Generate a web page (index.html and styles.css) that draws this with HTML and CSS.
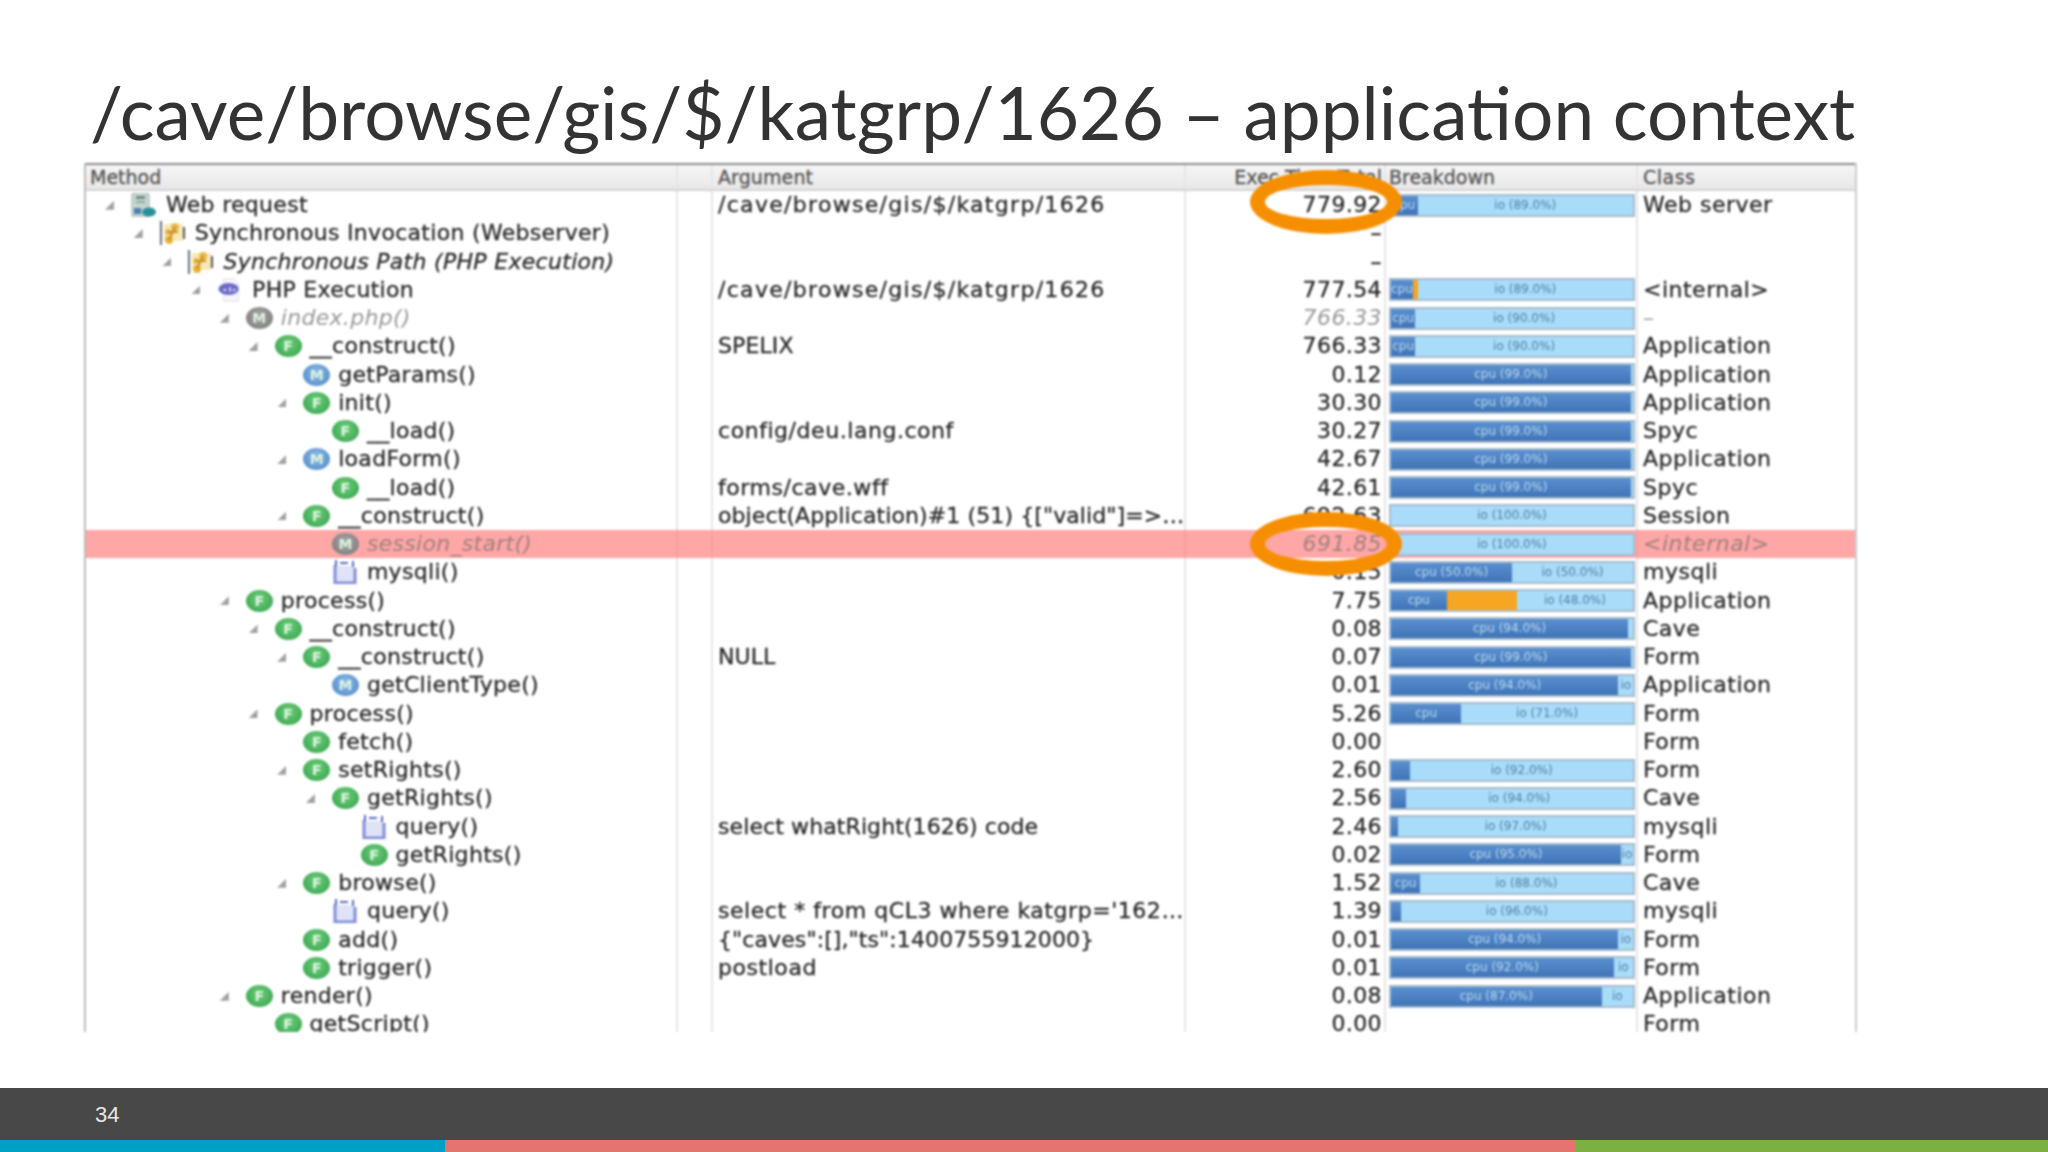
FILE: index.html
```html
<!DOCTYPE html>
<html lang="en">
<head>
  <meta charset="UTF-8">
  <title>/cave/browse/gis/$/katgrp/1626 – application context</title>
  <link rel="stylesheet" href="styles.css">
</head>
<body>

<svg class="sprite" aria-hidden="true">
  <symbol id="i-web" viewBox="0 0 26 24">
    <rect x="1" y="0" width="17" height="24" rx="2" fill="#c6d5cf" stroke="#9db0ab"/>
    <rect x="5" y="3" width="9" height="3" fill="#6f8f86"/>
    <rect x="5" y="8" width="9" height="2" fill="#8fa8a0"/>
    <rect x="3" y="15" width="7" height="6" fill="#4d7fb0"/>
    <ellipse cx="18" cy="19" rx="7" ry="4.500" fill="#2a8f9c"/>
  </symbol>
  <symbol id="i-sync" viewBox="0 0 26 24">
    <rect x="0" y="0" width="2" height="24" fill="#66707a"/>
    <rect x="4" y="3" width="19" height="17" fill="#f8e8b8"/>
    <rect x="23" y="6" width="2" height="12" fill="#555"/>
    <circle cx="15" cy="6" r="4" fill="#e8b84c"/>
    <circle cx="8" cy="11" r="3" fill="#e8b84c"/>
    <circle cx="9" cy="19" r="4" fill="#e8b23c"/>
    <path d="M9 19L15 6M8 11h10" stroke="#c98f1f" stroke-width="2"/>
  </symbol>
  <symbol id="i-php" viewBox="0 0 26 26">
    <path d="M6 1h11l5 5v19H6z" fill="#f7f7fb" stroke="#dcdce8"/>
    <ellipse cx="11.500" cy="12" rx="11" ry="6.500" fill="#6c68c6"/>
    <path d="M6 13h3M13 10v5M16 13h3" stroke="#dcdcf5" stroke-width="2"/>
  </symbol>
  <symbol id="i-db" viewBox="0 0 26 24">
    <rect x="3" y="6" width="20" height="17" rx="1" fill="#e0e3f6"/>
    <path d="M3 5v18h20V8" fill="none" stroke="#7f8dd8" stroke-width="3"/>
    <path d="M4 0v6M21 1v6M8 3h8" stroke="#5a6abc" stroke-width="2"/>
  </symbol>
</svg>

<div class="slide">
  <h1 class="title">/cave/browse/gis/$/katgrp/1626 – application context</h1>

  <div class="tree-table">
    <div class="row head">
      <div class="cell method">Method</div>
      <div class="cell gap"></div>
      <div class="cell arg">Argument</div>
      <div class="cell exec">Exec Time Total</div>
      <div class="cell breakdown">Breakdown</div>
      <div class="cell cls">Class</div>
    </div>

    <div class="row">
      <div class="cell method d0"><span class="tog"></span><svg class="ico"><use href="#i-web"/></svg>Web request</div>
      <div class="cell gap"></div>
      <div class="cell arg path">/cave/browse/gis/$/katgrp/1626</div>
      <div class="cell exec">779.92<span class="ring"></span></div>
      <div class="cell breakdown"><div class="bar"><span class="cpu" style="width:11%">cpu</span><span class="io">io (89.0%)</span></div></div>
      <div class="cell cls">Web server</div>
    </div>
    <div class="row">
      <div class="cell method d1"><span class="tog"></span><svg class="ico"><use href="#i-sync"/></svg>Synchronous Invocation (Webserver)</div>
      <div class="cell gap"></div>
      <div class="cell arg"></div>
      <div class="cell exec">–</div>
      <div class="cell breakdown"></div>
      <div class="cell cls"></div>
    </div>
    <div class="row">
      <div class="cell method d2 em"><span class="tog"></span><svg class="ico"><use href="#i-sync"/></svg>Synchronous Path (PHP Execution)</div>
      <div class="cell gap"></div>
      <div class="cell arg"></div>
      <div class="cell exec">–</div>
      <div class="cell breakdown"></div>
      <div class="cell cls"></div>
    </div>
    <div class="row">
      <div class="cell method d3"><span class="tog"></span><svg class="ico"><use href="#i-php"/></svg>PHP Execution</div>
      <div class="cell gap"></div>
      <div class="cell arg path">/cave/browse/gis/$/katgrp/1626</div>
      <div class="cell exec">777.54</div>
      <div class="cell breakdown"><div class="bar"><span class="cpu" style="width:9%">cpu</span><span class="hot" style="width:2%"></span><span class="io">io (89.0%)</span></div></div>
      <div class="cell cls">&lt;internal&gt;</div>
    </div>
    <div class="row muted">
      <div class="cell method d4"><span class="tog"></span><i class="fn gr">M</i>index.php()</div>
      <div class="cell gap"></div>
      <div class="cell arg"></div>
      <div class="cell exec">766.33</div>
      <div class="cell breakdown"><div class="bar"><span class="cpu" style="width:10%">cpu</span><span class="io">io (90.0%)</span></div></div>
      <div class="cell cls">–</div>
    </div>
    <div class="row">
      <div class="cell method d5"><span class="tog"></span><i class="fn">F</i>__construct()</div>
      <div class="cell gap"></div>
      <div class="cell arg">SPELIX</div>
      <div class="cell exec">766.33</div>
      <div class="cell breakdown"><div class="bar"><span class="cpu" style="width:10%">cpu</span><span class="io">io (90.0%)</span></div></div>
      <div class="cell cls">Application</div>
    </div>
    <div class="row">
      <div class="cell method d6"><span class="tog no"></span><i class="fn bl">M</i>getParams()</div>
      <div class="cell gap"></div>
      <div class="cell arg"></div>
      <div class="cell exec">0.12</div>
      <div class="cell breakdown"><div class="bar"><span class="cpu" style="width:99%">cpu (99.0%)</span><span class="io"></span></div></div>
      <div class="cell cls">Application</div>
    </div>
    <div class="row">
      <div class="cell method d6"><span class="tog"></span><i class="fn">F</i>init()</div>
      <div class="cell gap"></div>
      <div class="cell arg"></div>
      <div class="cell exec">30.30</div>
      <div class="cell breakdown"><div class="bar"><span class="cpu" style="width:99%">cpu (99.0%)</span><span class="io"></span></div></div>
      <div class="cell cls">Application</div>
    </div>
    <div class="row">
      <div class="cell method d7"><span class="tog no"></span><i class="fn">F</i>__load()</div>
      <div class="cell gap"></div>
      <div class="cell arg wide">config/deu.lang.conf</div>
      <div class="cell exec">30.27</div>
      <div class="cell breakdown"><div class="bar"><span class="cpu" style="width:99%">cpu (99.0%)</span><span class="io"></span></div></div>
      <div class="cell cls">Spyc</div>
    </div>
    <div class="row">
      <div class="cell method d6"><span class="tog"></span><i class="fn bl">M</i>loadForm()</div>
      <div class="cell gap"></div>
      <div class="cell arg"></div>
      <div class="cell exec">42.67</div>
      <div class="cell breakdown"><div class="bar"><span class="cpu" style="width:99%">cpu (99.0%)</span><span class="io"></span></div></div>
      <div class="cell cls">Application</div>
    </div>
    <div class="row">
      <div class="cell method d7"><span class="tog no"></span><i class="fn">F</i>__load()</div>
      <div class="cell gap"></div>
      <div class="cell arg wide">forms/cave.wff</div>
      <div class="cell exec">42.61</div>
      <div class="cell breakdown"><div class="bar"><span class="cpu" style="width:99%">cpu (99.0%)</span><span class="io"></span></div></div>
      <div class="cell cls">Spyc</div>
    </div>
    <div class="row">
      <div class="cell method d6"><span class="tog"></span><i class="fn">F</i>__construct()</div>
      <div class="cell gap"></div>
      <div class="cell arg">object(Application)#1 (51) {["valid"]=&gt;…</div>
      <div class="cell exec">692.63</div>
      <div class="cell breakdown"><div class="bar"><span class="io">io (100.0%)</span></div></div>
      <div class="cell cls">Session</div>
    </div>
    <div class="row hit muted">
      <div class="cell method d7"><span class="tog no"></span><i class="fn gr">M</i>session_start()</div>
      <div class="cell gap"></div>
      <div class="cell arg"></div>
      <div class="cell exec">691.85<span class="ring low"></span></div>
      <div class="cell breakdown"><div class="bar"><span class="io">io (100.0%)</span></div></div>
      <div class="cell cls">&lt;internal&gt;</div>
    </div>
    <div class="row">
      <div class="cell method d7"><span class="tog no"></span><svg class="ico"><use href="#i-db"/></svg>mysqli()</div>
      <div class="cell gap"></div>
      <div class="cell arg"></div>
      <div class="cell exec">0.15</div>
      <div class="cell breakdown"><div class="bar"><span class="cpu" style="width:50%">cpu (50.0%)</span><span class="io">io (50.0%)</span></div></div>
      <div class="cell cls">mysqli</div>
    </div>
    <div class="row">
      <div class="cell method d4"><span class="tog"></span><i class="fn">F</i>process()</div>
      <div class="cell gap"></div>
      <div class="cell arg"></div>
      <div class="cell exec">7.75</div>
      <div class="cell breakdown"><div class="bar"><span class="cpu" style="width:23%">cpu</span><span class="hot" style="width:29%"></span><span class="io">io (48.0%)</span></div></div>
      <div class="cell cls">Application</div>
    </div>
    <div class="row">
      <div class="cell method d5"><span class="tog"></span><i class="fn">F</i>__construct()</div>
      <div class="cell gap"></div>
      <div class="cell arg"></div>
      <div class="cell exec">0.08</div>
      <div class="cell breakdown"><div class="bar"><span class="cpu" style="width:98%">cpu (94.0%)</span><span class="io"></span></div></div>
      <div class="cell cls">Cave</div>
    </div>
    <div class="row">
      <div class="cell method d6"><span class="tog"></span><i class="fn">F</i>__construct()</div>
      <div class="cell gap"></div>
      <div class="cell arg">NULL</div>
      <div class="cell exec">0.07</div>
      <div class="cell breakdown"><div class="bar"><span class="cpu" style="width:99%">cpu (99.0%)</span><span class="io"></span></div></div>
      <div class="cell cls">Form</div>
    </div>
    <div class="row">
      <div class="cell method d7"><span class="tog no"></span><i class="fn bl">M</i>getClientType()</div>
      <div class="cell gap"></div>
      <div class="cell arg"></div>
      <div class="cell exec">0.01</div>
      <div class="cell breakdown"><div class="bar"><span class="cpu" style="width:94%">cpu (94.0%)</span><span class="io">io</span></div></div>
      <div class="cell cls">Application</div>
    </div>
    <div class="row">
      <div class="cell method d5"><span class="tog"></span><i class="fn">F</i>process()</div>
      <div class="cell gap"></div>
      <div class="cell arg"></div>
      <div class="cell exec">5.26</div>
      <div class="cell breakdown"><div class="bar"><span class="cpu" style="width:29%">cpu</span><span class="io">io (71.0%)</span></div></div>
      <div class="cell cls">Form</div>
    </div>
    <div class="row">
      <div class="cell method d6"><span class="tog no"></span><i class="fn">F</i>fetch()</div>
      <div class="cell gap"></div>
      <div class="cell arg"></div>
      <div class="cell exec">0.00</div>
      <div class="cell breakdown"></div>
      <div class="cell cls">Form</div>
    </div>
    <div class="row">
      <div class="cell method d6"><span class="tog"></span><i class="fn">F</i>setRights()</div>
      <div class="cell gap"></div>
      <div class="cell arg"></div>
      <div class="cell exec">2.60</div>
      <div class="cell breakdown"><div class="bar"><span class="cpu" style="width:8%"></span><span class="io">io (92.0%)</span></div></div>
      <div class="cell cls">Form</div>
    </div>
    <div class="row">
      <div class="cell method d7"><span class="tog"></span><i class="fn">F</i>getRights()</div>
      <div class="cell gap"></div>
      <div class="cell arg"></div>
      <div class="cell exec">2.56</div>
      <div class="cell breakdown"><div class="bar"><span class="cpu" style="width:6%"></span><span class="io">io (94.0%)</span></div></div>
      <div class="cell cls">Cave</div>
    </div>
    <div class="row">
      <div class="cell method d8"><span class="tog no"></span><svg class="ico"><use href="#i-db"/></svg>query()</div>
      <div class="cell gap"></div>
      <div class="cell arg">select whatRight(1626) code</div>
      <div class="cell exec">2.46</div>
      <div class="cell breakdown"><div class="bar"><span class="cpu" style="width:3%"></span><span class="io">io (97.0%)</span></div></div>
      <div class="cell cls">mysqli</div>
    </div>
    <div class="row">
      <div class="cell method d8"><span class="tog no"></span><i class="fn">F</i>getRights()</div>
      <div class="cell gap"></div>
      <div class="cell arg"></div>
      <div class="cell exec">0.02</div>
      <div class="cell breakdown"><div class="bar"><span class="cpu" style="width:95%">cpu (95.0%)</span><span class="io">io</span></div></div>
      <div class="cell cls">Form</div>
    </div>
    <div class="row">
      <div class="cell method d6"><span class="tog"></span><i class="fn">F</i>browse()</div>
      <div class="cell gap"></div>
      <div class="cell arg"></div>
      <div class="cell exec">1.52</div>
      <div class="cell breakdown"><div class="bar"><span class="cpu" style="width:12%">cpu</span><span class="io">io (88.0%)</span></div></div>
      <div class="cell cls">Cave</div>
    </div>
    <div class="row">
      <div class="cell method d7"><span class="tog no"></span><svg class="ico"><use href="#i-db"/></svg>query()</div>
      <div class="cell gap"></div>
      <div class="cell arg wide">select * from qCL3 where katgrp='162…</div>
      <div class="cell exec">1.39</div>
      <div class="cell breakdown"><div class="bar"><span class="cpu" style="width:4%"></span><span class="io">io (96.0%)</span></div></div>
      <div class="cell cls">mysqli</div>
    </div>
    <div class="row">
      <div class="cell method d6"><span class="tog no"></span><i class="fn">F</i>add()</div>
      <div class="cell gap"></div>
      <div class="cell arg">{"caves":[],"ts":1400755912000}</div>
      <div class="cell exec">0.01</div>
      <div class="cell breakdown"><div class="bar"><span class="cpu" style="width:94%">cpu (94.0%)</span><span class="io">io</span></div></div>
      <div class="cell cls">Form</div>
    </div>
    <div class="row">
      <div class="cell method d6"><span class="tog no"></span><i class="fn">F</i>trigger()</div>
      <div class="cell gap"></div>
      <div class="cell arg wide">postload</div>
      <div class="cell exec">0.01</div>
      <div class="cell breakdown"><div class="bar"><span class="cpu" style="width:92%">cpu (92.0%)</span><span class="io">io</span></div></div>
      <div class="cell cls">Form</div>
    </div>
    <div class="row">
      <div class="cell method d4"><span class="tog"></span><i class="fn">F</i>render()</div>
      <div class="cell gap"></div>
      <div class="cell arg"></div>
      <div class="cell exec">0.08</div>
      <div class="cell breakdown"><div class="bar"><span class="cpu" style="width:87%">cpu (87.0%)</span><span class="io">io</span></div></div>
      <div class="cell cls">Application</div>
    </div>
    <div class="row">
      <div class="cell method d5"><span class="tog no"></span><i class="fn">F</i>getScript()</div>
      <div class="cell gap"></div>
      <div class="cell arg"></div>
      <div class="cell exec">0.00</div>
      <div class="cell breakdown"></div>
      <div class="cell cls">Form</div>
    </div>
  </div>

  <div class="footer">
    <div class="page-no">34</div>
    <div class="strip">
      <span class="s-teal"></span>
      <span class="s-red"></span>
      <span class="s-green"></span>
    </div>
  </div>
</div>

</body>
</html>
```

FILE: styles.css
```css
body {
  margin: 0;
  background: #fff;
  font-family: "DejaVu Sans", sans-serif;
  color: #333;
}

.sprite {
  position: absolute;
  width: 0;
  height: 0;
}

.slide {
  display: flex;
  flex-direction: column;
  height: 1152px;
  overflow: hidden;
}

.title {
  margin: 0;
  padding: 72px 0 0 90px;
  height: 91px;
  font-family: Lato, sans-serif;
  font-size: 73px;
  font-weight: 400;
  line-height: 80px;
  color: #333;
  white-space: nowrap;
}

/* the table is a blurry video still, so the whole thing gets a slight blur */
.tree-table {
  width: 1773px;
  height: 869px;
  margin-left: 84px;
  overflow: hidden;
  border-left: 2px solid #bbb;
  border-right: 2px solid #ccc;
  box-sizing: border-box;
  font-size: 22px;
  letter-spacing: 0.3px;
  color: #2a2a2a;
  -webkit-text-stroke: 0.3px;
  filter: blur(0.8px);
}

.row {
  display: grid;
  grid-template-columns: 592px 35px 473px 200px 252px 1fr;
  height: 28.25px;
  line-height: 28px;
  white-space: nowrap;
}

.head {
  height: 28px;
  border-top: 2px solid #8a8a8a;
  border-bottom: 2px solid #d4d4d4;
  box-sizing: border-box;
  background: linear-gradient(#f6f6f6, #e8e8e8);
  font-size: 19px;
  letter-spacing: 0;
  line-height: 24px;
  color: #555;
}

.cell {
  display: flex;
  align-items: center;
  min-width: 0;
  border-right: 2px solid #e6e6e6;
  box-sizing: border-box;
  padding-left: 5px;
}

.cell.cls {
  border-right: 0;
  letter-spacing: 0.5px;
}

.arg {
  letter-spacing: 0.1px;
}

.arg.wide {
  letter-spacing: 0.55px;
}

.arg.path {
  letter-spacing: 1.3px;
}

.exec {
  position: relative;
  justify-content: flex-end;
  padding: 0 2px 0 0;
  letter-spacing: 0.4px;
}

.head .exec {
  letter-spacing: 0;
}

.breakdown {
  padding: 0 1px 0 3px;
}

.method {
  padding-left: 19px;
}

.head .method {
  padding-left: 4px;
}

.d1 { padding-left: 47.7px; }
.d2 { padding-left: 76.4px; }
.d3 { padding-left: 105.1px; }
.d4 { padding-left: 133.8px; }
.d5 { padding-left: 162.5px; }
.d6 { padding-left: 191.2px; }
.d7 { padding-left: 219.9px; }
.d8 { padding-left: 248.6px; }

.em {
  font-style: italic;
}

.tog {
  flex: none;
  width: 9px;
  height: 9px;
  margin-right: 17px;
  background: #a0a0a0;
  clip-path: polygon(100% 0, 100% 100%, 0 100%);
}

.tog.no {
  background: none;
}

.ico {
  flex: none;
  width: 26px;
  height: 24px;
  margin-right: 9px;
}

.fn {
  flex: none;
  display: block;
  width: 27px;
  height: 22px;
  margin-right: 8px;
  border-radius: 50%;
  background: radial-gradient(circle at 50% 40%, #6fcf7c, #2f9d48);
  color: #dff5e2;
  font-size: 14px;
  font-style: normal;
  font-weight: bold;
  letter-spacing: 0;
  line-height: 22px;
  text-align: center;
  -webkit-text-stroke: 0;
}

.fn.bl {
  background: radial-gradient(circle at 50% 40%, #8dbbe8, #4a85c4);
}

.fn.gr {
  background: radial-gradient(circle at 50% 40%, #a5a5a5, #777);
}

.muted .method,
.muted .exec,
.muted .cls {
  font-style: italic;
  color: #999;
  -webkit-text-stroke: 0;
}

.hit {
  background: #ffa6a6;
}

.hit .cell {
  border-right-color: #f7a0a0;
}

.hit .method,
.hit .exec,
.hit .cls {
  color: #a08080;
}

.bar {
  display: flex;
  width: 100%;
  height: 23px;
  border: 2px solid #a7bbcd;
  box-sizing: border-box;
  font-size: 12px;
  font-style: normal;
  line-height: 19px;
  text-align: center;
  letter-spacing: 0;
  -webkit-text-stroke: 0;
}

.cpu {
  overflow: hidden;
  background: linear-gradient(#5a90cf, #3f74b8);
  color: #bcd9f2;
}

.hot {
  background: #f5a623;
}

.io {
  flex: 1;
  overflow: hidden;
  background: #a9dcf9;
  color: #4f7fa5;
}

/* hand-drawn orange marker over the exec column */
.ring {
  position: absolute;
  top: -21px;
  right: -18px;
  z-index: 2;
  width: 152px;
  height: 64px;
  border: 15px solid #f68f00;
  border-radius: 50%;
  box-sizing: border-box;
}

.ring.low {
  top: -18px;
}

.footer {
  margin-top: auto;
  background: #484848;
}

.page-no {
  height: 52px;
  padding-left: 95px;
  font-family: "Liberation Sans", sans-serif;
  font-size: 22px;
  line-height: 54px;
  color: #e6e6e6;
}

.strip {
  display: grid;
  grid-template-columns: 445px 1131px 1fr;
  height: 12px;
}

.s-teal { background: #00a0c6; }
.s-red { background: #e3746f; }
.s-green { background: #7cb043; }
```
